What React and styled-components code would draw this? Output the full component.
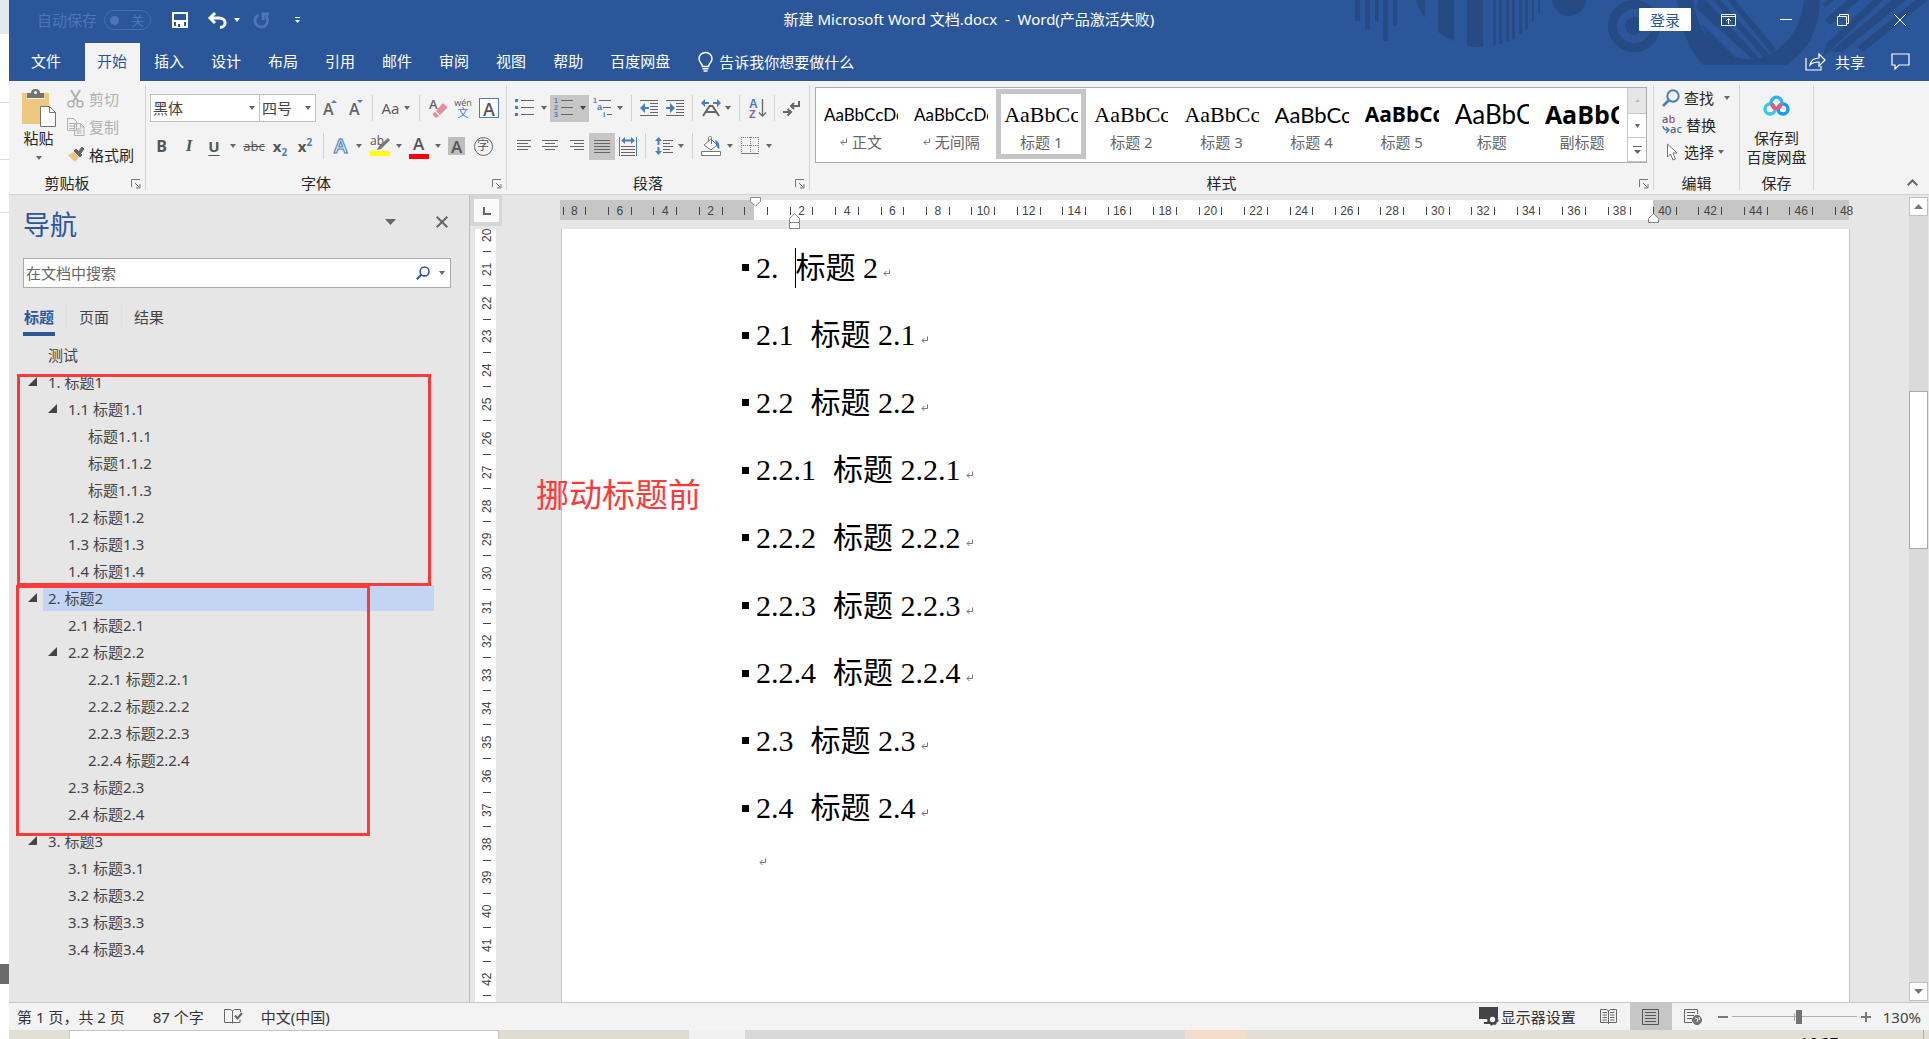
import React from "react";
import styled, { createGlobalStyle, css } from "styled-components";

const uiFont = '"Noto Sans", "Noto Sans CJK SC", sans-serif';
const blue = "#2b579a";
const accent = "#4a7ebb";
const ink = "#666666";

const GlobalStyle = createGlobalStyle`
  *, *::before, *::after { box-sizing: border-box; }
  html, body, #root { height: 100%; }
  body { margin: 0; overflow: hidden; background: #fff; font: 15px/16px ${uiFont}; color: #262626; }
  button, input, select { font: inherit; color: inherit; }
  button { margin: 0; padding: 0; border: 0; background: none; white-space: nowrap; }
  a { color: inherit; text-decoration: none; }
  svg { display: block; flex: none; overflow: visible; }
  ul, ol { margin: 0; padding: 0; list-style: none; }
  h1, h2 { margin: 0; font-weight: 400; }
`;

/* ---------- shell ---------- */
const Desktop = styled.div`
  display: grid;
  grid-template-columns: 9px minmax(0, 1fr);
  height: 100vh;
`;
const BackWindow = styled.div`
  display: flex;
  flex-direction: column;
  background: #fff;
`;
const BackBand = styled.div`
  height: ${(p) => p.$h}px;
  flex: ${(p) => (p.$grow ? 1 : "none")};
  background: ${(p) => p.$bg || "transparent"};
  border-bottom: ${(p) => (p.$line ? "1px solid #dcdcdc" : "0")};
`;
const Column = styled.div`
  display: flex;
  flex-direction: column;
  min-width: 0;
`;
const Window = styled.div`
  display: flex;
  flex-direction: column;
  flex: 1;
  min-height: 0;
`;
const Taskbar = styled.div`
  display: flex;
  height: 9px;
  overflow: hidden;
  background: #e4dfd5;
`;
const TaskPart = styled.div`
  width: ${(p) => p.$w}px;
  flex: ${(p) => (p.$grow ? 1 : "none")};
  background: ${(p) => p.$bg};
  border: solid #c4c4c4;
  border-width: ${(p) => (p.$edge ? "1px 1px 0 1px" : "0")};
`;
const Clock = styled.time`
  width: 130px;
  padding: 4px 0 0 6px;
  color: #000;
  border-right: 1px solid #b0b0b0;
`;

/* ---------- title bar ---------- */
const Header = styled.header`
  position: relative;
  flex: none;
  background: ${blue};
  color: #fff;
`;
const Artwork = styled.svg`
  position: absolute;
  top: 0;
  right: 0;
  overflow: hidden;
`;
const TitleBar = styled.div`
  position: relative;
  display: grid;
  grid-template-columns: 1fr auto 1fr;
  height: 43px;
`;
const QuickAccess = styled.div`
  display: flex;
  align-items: center;
  height: 40px;
  padding-left: 28px;
`;
const AutoSave = styled.label`
  display: flex;
  align-items: center;
  gap: 7px;
  color: #4d76b3;
`;
const Toggle = styled.span`
  display: flex;
  align-items: center;
  justify-content: space-between;
  width: 47px;
  height: 20px;
  padding: 0 6px 0 5px;
  border: 1px solid #4570ae;
  border-radius: 10px;
  font-size: 13px;
`;
const ToggleInput = styled.input`
  appearance: none;
  width: 9px;
  height: 9px;
  margin: 0;
  border-radius: 50%;
  background: #4d76b3;
`;
const QuickButton = styled.button`
  display: flex;
  align-items: center;
  justify-content: center;
  width: ${(p) => p.$w}px;
  height: 32px;
`;
const DocTitle = styled.h1`
  font-size: 15px;
  line-height: 38px;
  white-space: pre;
`;
const WindowActions = styled.div`
  display: flex;
  justify-content: flex-end;
  align-items: center;
  height: 39px;
  padding-right: 1px;
`;
const SignIn = styled.button`
  width: 52px;
  height: 23px;
  margin-right: 9px;
  border-radius: 1px;
  background: #fff;
  color: ${blue};
`;
const WindowButton = styled.button`
  display: grid;
  place-items: center;
  width: 57px;
  height: 39px;
`;

/* ---------- ribbon tabs ---------- */
const TabBar = styled.nav`
  position: relative;
  display: flex;
  gap: 2px;
  height: 38px;
`;
const Tab = styled.a`
  width: ${(p) => (p.$file ? "74px" : "auto")};
  padding: 0 ${(p) => (p.$file ? 0 : "13px")} 0 ${(p) => (p.$file ? 0 : "12px")};
  text-align: center;
  line-height: 36px;
  ${(p) => p.$active && css`background: #f3f3f3; color: ${blue};`}
`;
const TellMe = styled.button`
  display: flex;
  align-items: center;
  gap: 6px;
  height: 37px;
  margin-left: 13px;
`;
const ShareGroup = styled.div`
  display: flex;
  align-items: center;
  gap: 26px;
  height: 37px;
  margin-left: auto;
  padding-right: 19px;
`;
const ShareButton = styled.button`
  display: flex;
  align-items: center;
  gap: 9px;
`;

/* ---------- ribbon ---------- */
const Ribbon = styled.section`
  display: flex;
  flex: none;
  height: 114px;
  padding: 4px 0;
  background: #f3f3f3;
  border-bottom: 1px solid #d2d2d2;
`;
const Group = styled.section`
  display: flex;
  flex-direction: column;
  width: ${(p) => (p.$w ? `${p.$w}px` : "auto")};
  flex: ${(p) => (p.$w ? "none" : 1)};
  min-width: 0;
  border-right: 1px solid #d4d4d4;
`;
const GroupBody = styled.div`
  flex: 1;
  min-height: 0;
`;
const GroupFooter = styled.footer`
  display: flex;
  align-items: center;
  height: 15px;
`;
const GroupLabel = styled.span`
  flex: 1;
  text-align: center;
`;
const Launcher = styled.button`
  width: 20px;
  padding: 3px 0 0 6px;
`;
const ClipboardBody = styled.div`
  display: flex;
  gap: 6px;
  padding-left: 7px;
`;
const BigButton = styled.button`
  display: flex;
  flex-direction: column;
  align-items: center;
  width: ${(p) => p.$w}px;
  padding-top: ${(p) => p.$top}px;
  line-height: 19px;
  svg + span { margin-top: ${(p) => p.$gap}px; }
  span + svg { margin-top: 8px; }
`;
const SmallList = styled.div`
  display: flex;
  flex-direction: column;
  gap: 1px;
  padding-left: ${(p) => p.$pad || 0}px;
`;
const SmallButton = styled.button`
  display: flex;
  align-items: center;
  gap: 4px;
  height: ${(p) => p.$h || 27}px;
  color: ${(p) => (p.disabled ? "#b1b1b1" : "#262626")};
  span + svg { margin-left: ${(p) => p.$gap || 0}px; }
`;
const ToolRows = styled.div`
  display: flex;
  flex-direction: column;
  gap: 10px;
  padding: 9px 0 0 4px;
`;
const ToolRow = styled.div`
  display: flex;
  align-items: center;
  height: 28px;
`;
const Tool = styled.button`
  display: flex;
  align-items: center;
  justify-content: center;
  gap: ${(p) => p.$gap ?? 7}px;
  width: ${(p) => p.$w}px;
  height: 27px;
  color: #555;
  background: ${(p) => (p.$on ? "#c6c6c6" : "transparent")};
`;
const Rule = styled.span`
  width: 1px;
  height: 26px;
  margin: 0 4px;
  background: #d2d2d2;
`;
const Combo = styled.label`
  display: grid;
  align-items: center;
  width: ${(p) => p.$w}px;
  height: 28px;
  background: #fff;
  border: 1px solid #c0c0c0;
  border-left-width: ${(p) => (p.$joined ? 0 : 1)}px;
  select, svg { grid-area: 1 / 1; }
  svg { justify-self: end; margin-right: 4px; pointer-events: none; }
`;
const Select = styled.select`
  appearance: none;
  width: 100%;
  height: 26px;
  padding: 0 0 0 2px;
  border: 0;
  background: none;
  color: #444;
`;
const Glyph = styled.span`
  font-family: ${(p) => p.$font || '"Open Sans", "Noto Sans", sans-serif'};
  font-size: ${(p) => p.$size || 18}px;
  line-height: 20px;
  font-weight: ${(p) => p.$weight || 400};
  font-style: ${(p) => (p.$italic ? "italic" : "normal")};
  text-decoration: ${(p) => p.$line || "none"};
  text-decoration-thickness: 1px;
  text-underline-offset: 3px;
  color: ${(p) => p.$color || "#555"};
  sub, sup { font-size: 10px; line-height: 0; color: ${accent}; }
`;
const Underbar = styled.span`
  display: flex;
  flex-direction: column;
  align-items: center;
  width: 20px;
  border-bottom: 5px solid ${(p) => p.$color};
  line-height: 16px;
`;
const BoxedA = styled.span`
  display: grid;
  place-items: center;
  width: 20px;
  height: 20px;
  border: 1px solid ${accent};
  background: #fff;
`;
const ShadedA = styled.span`
  width: 17px;
  height: 18px;
  background: #bdbdbd;
  line-height: 18px;
`;
const OutlinedA = styled.span`
  width: 16px;
  font: 600 20px/22px "Open Sans", sans-serif;
  color: #fff;
  -webkit-text-stroke: 1px ${accent};
  text-shadow: 0 0 2px #7fb2ea;
`;
const CircledChar = styled.span`
  display: grid;
  place-items: center;
  width: 19px;
  height: 19px;
  border: 1px solid #666;
  border-radius: 50%;
  font-size: 12px;
`;
const Phonetic = styled.span`
  display: flex;
  flex-direction: column;
  align-items: center;
  font: 9px/9px "Open Sans", sans-serif;
`;
const PhoneticBase = styled.span`
  font: 11px/12px ${uiFont};
  color: ${accent};
`;

/* ---------- style gallery ---------- */
const Gallery = styled.div`
  display: grid;
  grid-template-columns: repeat(9, minmax(0, 1fr)) 19px;
  height: 76px;
  margin: 2px 6px 0 5px;
  background: #fff;
  border: 1px solid #ababab;
`;
const StyleCard = styled.button`
  display: flex;
  flex-direction: column;
  align-items: center;
  height: 70px;
  margin-top: 1px;
  padding: ${(p) => (p.$on ? "4px 3px" : "9px 8px")};
  border: ${(p) => (p.$on ? "5px solid #c5c5c5" : "0")};
  min-width: 0;
`;
const Sample = styled.span`
  align-self: stretch;
  height: 33px;
  overflow: hidden;
  text-align: left;
  line-height: 33px;
  color: #000;
  font-family: ${(p) => p.$font};
  font-size: ${(p) => p.$size}px;
  font-weight: ${(p) => p.$weight || 400};
`;
const StyleName = styled.span`
  display: flex;
  align-items: center;
  gap: 5px;
  margin-top: 5px;
  color: #666;
`;
const GalleryScroll = styled.div`
  display: grid;
  grid-template-rows: 26px 24px 24px;
`;
const GalleryButton = styled.button`
  display: grid;
  place-items: center;
  border: solid #c6c6c6;
  border-width: 0 0 1px 1px;
  background: ${(p) => (p.disabled ? "#e6e6e6" : "#fff")};
`;
const Collapse = styled.button`
  display: flex;
  align-items: flex-end;
  justify-content: flex-end;
  width: 115px;
  padding: 0 11px 4px 0;
`;

/* ---------- workspace ---------- */
const Workspace = styled.main`
  display: flex;
  flex: 1;
  min-height: 0;
  background: #e6e6e6;
`;
const NavPane = styled.aside`
  position: relative;
  width: 461px;
  flex: none;
  padding: 0 18px 0 14px;
  border-right: 1px solid #bcbcbc;
  color: #444;
`;
const PaneHeader = styled.header`
  display: flex;
  align-items: center;
  height: 60px;
  margin-bottom: 3px;
`;
const PaneTitle = styled.h2`
  flex: 1;
  font-size: 27px;
  line-height: 30px;
  color: ${blue};
`;
const PaneButton = styled.button`
  display: grid;
  place-items: center;
  width: 51px;
  height: 24px;
  margin-bottom: 6px;
  &:last-child { width: 18px; margin-left: 17px; }
`;
const SearchBox = styled.label`
  display: flex;
  align-items: center;
  gap: 9px;
  height: 30px;
  padding-right: 5px;
  background: #fff;
  border: 1px solid #ababab;
`;
const SearchInput = styled.input`
  flex: 1;
  min-width: 0;
  height: 28px;
  padding: 0 0 0 2px;
  border: 0;
  outline: 0;
  background: none;
  &::placeholder { color: #666; opacity: 1; }
`;
const PaneTabs = styled.div`
  display: flex;
  margin-top: 14px;
`;
const PaneTab = styled.button`
  width: 32px;
  height: 34px;
  border-bottom: 4px solid ${(p) => (p.$on ? blue : "transparent")};
  color: ${(p) => (p.$on ? blue : "#444")};
  font-weight: ${(p) => (p.$on ? 700 : 400)};
`;
const PaneRule = styled.span`
  width: 1px;
  height: 24px;
  margin: 3px 11px 0;
  background: #dfdfdf;
`;
const Outline = styled.ul`
  margin: 5px 17px 0 0;
`;
const OutlineItem = styled.li`
  display: flex;
  align-items: center;
  height: 27px;
  padding-left: ${(p) => 5 + 20 * p.$level}px;
`;
const Expander = styled.button`
  width: 15px;
  height: 20px;
`;
const OutlineLink = styled.a`
  flex: 1;
  padding-left: 5px;
  line-height: 26px;
  background: ${(p) => (p.$on ? "#c2d5f2" : "transparent")};
`;
const RedFrame = styled.div`
  position: absolute;
  top: ${(p) => p.$y}px;
  left: ${(p) => p.$x}px;
  width: ${(p) => p.$w}px;
  height: ${(p) => p.$h}px;
  border: 3px solid #fc3a3a;
  pointer-events: none;
`;
const RedNote = styled.div`
  position: absolute;
  top: 280px;
  left: 34px;
  font-size: 33px;
  line-height: 40px;
  color: #fc3a3a;
`;

/* ---------- rulers and page ---------- */
const SideRuler = styled.div`
  display: flex;
  flex-direction: column;
  width: 32px;
  flex: none;
`;
const TabStop = styled.button`
  display: grid;
  place-items: center;
  height: 31px;
  margin-bottom: 3px;
  background: #fafafa;
  border: solid #d6d6d6;
  border-width: 4px 3px 4px 4px;
  color: #666;
`;
const VScale = styled.div`
  display: flex;
  flex-direction: column;
  justify-content: space-between;
  flex: 1;
  width: 21px;
  margin-left: 5px;
  background: #fff;
  font: 12px/12px "Liberation Sans", sans-serif;
  color: #444;
`;
const VMark = styled.span`
  display: flex;
  align-items: center;
  justify-content: center;
  height: 12px;
  margin-left: 3px;
  writing-mode: vertical-rl;
  transform: rotate(180deg);
`;
const VTick = styled.i`
  width: 8px;
  height: 1px;
  background: #444;
`;
const Canvas = styled.div`
  position: relative;
  display: flex;
  flex-direction: column;
  gap: 9px;
  flex: 1;
  min-width: 0;
  padding: 5px 59px 0;
`;
const HScale = styled.div`
  position: relative;
  display: flex;
  justify-content: space-between;
  align-items: center;
  height: 20px;
  margin: 0 1px 0 -1px;
  padding: 2px 2px 0 3px;
  background: linear-gradient(to right, #c6c6c6 194px, #fff 194px calc(100% - 196px), #c6c6c6 0);
  font: 12px/12px "Liberation Sans", sans-serif;
  color: #444;
`;
const HMark = styled.span`
  display: flex;
  justify-content: center;
  width: 0;
`;
const HTick = styled.i`
  width: 1px;
  height: 8px;
  flex: none;
  background: #444;
`;
const IndentMarker = styled.svg`
  position: absolute;
  top: ${(p) => p.$top}px;
  ${(p) => p.$side}: ${(p) => p.$at}px;
`;
const Page = styled.article`
  flex: 1;
  padding: 5px 0 0 180px;
  background: #fff;
  border: solid #c6c6c6;
  border-width: 0 1px;
`;
const Headings = styled.ol`
  display: grid;
  grid-auto-rows: 1fr;
  height: 608px;
`;
const HeadingLine = styled.li`
  display: flex;
  align-items: center;
  font: 30px/40px "Liberation Serif", "Noto Sans CJK SC", serif;
  color: #000;
`;
const Bullet = styled.i`
  width: 7px;
  height: 7px;
  margin-right: 7px;
  background: #000;
`;
const HeadingNumber = styled.span`
  margin-right: 17px;
`;
const TextCaret = styled.i`
  width: 1px;
  height: 40px;
  margin-left: -1px;
  background: #000;
`;
const MarkSlot = styled.span`
  padding: 10px 0 0 5px;
`;
const EmptyLine = styled.p`
  margin: 0;
  padding: 16px 0 0 17px;
`;
const ScrollBar = styled.div`
  display: flex;
  flex-direction: column;
  width: 19px;
  flex: none;
  margin: 2px 1px 1px 0;
  background: #dadada;
`;
const ScrollButton = styled.button`
  display: grid;
  place-items: center;
  height: 19px;
  background: #fff;
  border: 1px solid #c0c0c0;
`;
const ScrollThumb = styled.div`
  height: 158px;
  margin: 175px 0 auto;
  background: #fff;
  border: 1px solid #ababab;
`;

/* ---------- status bar ---------- */
const StatusBar = styled.footer`
  display: flex;
  align-items: center;
  flex: none;
  height: 28px;
  padding: 0 8px;
  background: #f3f3f3;
  border-top: 1px solid #c6c6c6;
  color: #444;
`;
const StatusItem = styled.button`
  display: flex;
  align-items: center;
  gap: 2px;
  margin-right: ${(p) => p.$gap || 0}px;
  color: #333;
`;
const StatusRight = styled.div`
  display: flex;
  align-items: center;
  margin-left: auto;
`;
const ViewButton = styled.button`
  display: grid;
  place-items: center;
  width: 42px;
  height: 27px;
  background: ${(p) => (p.$on ? "#c6c6c6" : "transparent")};
`;
const ZoomButton = styled.button`
  width: 18px;
  height: 20px;
  padding-left: 4px;
`;
const ZoomSlider = styled.input`
  appearance: none;
  width: 125px;
  height: 14px;
  margin: 0;
  background:
    linear-gradient(#a6a6a6, #a6a6a6) center / 1px 8px no-repeat,
    linear-gradient(#b0b0b0, #b0b0b0) center / 100% 1px no-repeat;
  &::-webkit-slider-thumb {
    appearance: none;
    width: 6px;
    height: 14px;
    background: #737373;
  }
`;
const ZoomValue = styled.output`
  margin-left: 8px;
`;

/* ---------- drawings ---------- */
const Down = ({ c = "#666", w = 7, h = 4 }) => (
  <svg width={w} height={h} viewBox="0 0 7 4" preserveAspectRatio="none"><path d="M0 0h7L3.5 4z" fill={c} /></svg>
);
const Lines = ({ rows, w = 18, h = 18, c = ink, children }) => (
  <svg width={w} height={h} viewBox={`0 0 ${w} ${h}`} shapeRendering="crispEdges">
    {rows.map(([x, y, l]) => <rect key={`${x}-${y}`} x={x} y={y} width={l} height="1" fill={c} />)}
    {children}
  </svg>
);
const ReturnMark = () => (
  <svg width="7" height="8" viewBox="0 0 7 8" fill="none" stroke="#777"><path d="M6.5 0.5v4H1M3.5 2L1 4.5 3.5 7" /></svg>
);
const LauncherIcon = () => (
  <svg width="10" height="10" viewBox="0 0 10 10" fill="none" stroke="#777"><path d="M0.5 8V0.5H9M4 4l4.5 4.5M9 5v4H5" /></svg>
);
const Corner = () => <svg width="9" height="9" viewBox="0 0 9 9"><path d="M9 0v9H0z" fill="#444" /></svg>;
const Magnifier = ({ s = 18, c = accent }) => (
  <svg width={s} height={s} viewBox="0 0 18 18" fill="none" stroke={c} strokeWidth="2"><circle cx="11" cy="7" r="5.7" /><path d="M7 11L1 17" strokeWidth="2.6" /></svg>
);

const HeaderArt = () => (
  <Artwork width="580" height="81" viewBox="0 0 580 81" fill="#254a84" aria-hidden="true">
    <path d="M6 0h5v21H6zM16 0h5v29h-5zM26 0h4v21h-4zM34 0h5v41h-5zM44 0h4v26h-4z" />
    <path d="M67 0h9v18Q70 10 67 0zM89 0h16v41q-9-3-16-9zM118 0h16v47q-8 0-16-1z" />
    <path d="M144 0h3v45h-3zM150 0h3v44h-3zM157 0h3v42h-3zM163 0h3v39h-3zM170 0h3v34h-3zM176 0h3v29h-3zM183 0h2v22h-2zM189 0h2v13h-2z" />
    <circle cx="220" cy="-1" r="17" />
    <circle cx="285" cy="26" r="21.5" fill="none" stroke="#254a84" strokeWidth="9" />
    <circle cx="285" cy="26" r="9" />
    <path d="M328 0h16q3 22 14 37 18 22 41 22 22 0 39-18 15-17 17-41h16q-1 44-34 65h-83Q333 43 328 0z" />
    <path d="M350 0h7l53 58h-8L347 8zM364 0h7l49 54-6 3zM379 0h7l41 49-5 4zM353 24l34 34-10-2q-18-10-24-32z" />
    <path d="M498 0h12l-29 25-5-5zM480 0h5l-8 7-4-3zM543 0h14l-64 52h-12zM524 0h10l-61 58 5-15zM567 0h12l-65 52-6-5z" />
  </Artwork>
);
const SaveIcon = () => (
  <svg width="16" height="16" viewBox="0 0 16 16" fill="none" stroke="#fff" strokeWidth="2"><path d="M1 1h14v14H1zM1 9h14" /><path d="M4 10h8v5H4z" fill="#fff" stroke="none" /><path d="M6 12h2v3H6z" fill={blue} stroke="none" /></svg>
);
const UndoIcon = () => (
  <svg width="19" height="17" viewBox="0 0 19 17" fill="none" stroke="#fff" strokeWidth="3"><path d="M3 6h8c8 0 8 9 1 9.500M7 1L2 6l5 5" /></svg>
);
const RedoIcon = () => (
  <svg width="17" height="17" viewBox="0 0 17 17" fill="none" stroke="#4d76b3" strokeWidth="2.800"><path d="M5.500 3A6.300 6.300 0 1 0 12.500 4M10 8V2h6" /></svg>
);
const BulbIcon = () => (
  <svg width="15" height="20" viewBox="0 0 15 20" fill="none" stroke="#fff" strokeWidth="1.500"><path d="M4.500 14.500c0-3-3.500-4-3.500-7.800a6.500 6.200 0 0 1 13 0c0 3.800-3.500 4.800-3.500 7.800zM4.500 16.800h6M5.500 19h4" /></svg>
);
const ShareIcon = () => (
  <svg width="21" height="18" viewBox="0 0 21 18" fill="none" stroke="#fff" strokeWidth="1.200"><path d="M1 5v12h15v-4M5 12c1-5 4-7 9-7V1l6 6-6 6V9c-4 0-7 1-9 3z" /></svg>
);
const CommentIcon = () => (
  <svg width="19" height="17" viewBox="0 0 19 17" fill="none" stroke="#fff" strokeWidth="1.200"><path d="M1 1h17v11H8l-4 4v-4H1z" /></svg>
);
const PasteIcon = () => (
  <svg width="34" height="38" viewBox="0 0 34 38"><path d="M0 4h27v31H0z" fill="#edc87e" /><path d="M5 9V4h4q0-4 4.500-4T18 4h4v5z" fill="#737373" /><path d="M4 9.500h19" stroke="#f3f3f3" /><circle cx="13.500" cy="3.500" r="1.500" fill="#f3f3f3" /><path d="M18.500 17.500h9l6 6v14h-15z" fill="#fff" stroke="#737373" /><path d="M27.500 17.500v6h6" fill="none" stroke="#737373" /></svg>
);
const ScissorsIcon = () => (
  <svg width="18" height="18" viewBox="0 0 18 18" fill="none" stroke="#b1b1b1" strokeWidth="1.500"><path d="M4 0l7.500 12M13 0L6 12" strokeWidth="2" /><circle cx="4" cy="14" r="3" /><circle cx="13" cy="14" r="3" /></svg>
);
const CopyIcon = () => (
  <svg width="18" height="18" viewBox="0 0 18 18" fill="#f3f3f3" stroke="#b1b1b1"><path d="M.5.5h6l3 3v9h-9zM2 5.500h5M2 8h5M2 10.500h5M7.500 5.500h6l3.500 3.500v8.500H7.500zM13.500 5.500V9H17M9.500 11h5M9.500 13h5M9.500 15h5" /></svg>
);
const BrushIcon = () => (
  <svg width="18" height="17" viewBox="0 0 18 17"><path d="M1 9l6-3 5 5-4 5z" fill="#edc380" /><path d="M7 5l6 6 2-2-6-6zM12 5l3-4 2 2-3 4z" fill="#666" stroke="#666" /></svg>
);
const GrowA = ({ down }) => (
  <svg width="14" height="18" viewBox="0 0 14 18"><text x="0" y="16" fontFamily="Open Sans" fontSize="16" fontWeight="600" fill="#666">A</text><path d={down ? "M8 1h6l-3 3z" : "M8 4h6l-3-3z"} fill={accent} /></svg>
);
const EraserIcon = () => (
  <svg width="19" height="20" viewBox="0 0 19 20"><text x="0" y="11" fontFamily="Open Sans" fontSize="13" fontWeight="600" fill="#666">A</text><path d="M7 13l6-7q1-1 2 0l2.500 2.500q1 1 0 2L11 17z" fill="#e98b9b" /><path d="M6 14l4 4-2 1.500q-1 .5-2-.3L4 17q-.6-1 0-1.500z" fill="#e98b9b" /></svg>
);
const HighlightIcon = () => (
  <svg width="20" height="20" viewBox="0 0 20 20"><rect y="15" width="20" height="5" fill="#ff0" /><text x="0" y="9" fontFamily="Open Sans" fontSize="12" fill="#555">ab</text><path d="M18 2l2 2-9 9-4 1 2-4z" fill="#777" /></svg>
);
const BulletsIcon = () => (
  <Lines w={19} rows={[[6, 1, 13], [6, 8, 13], [6, 15, 13]]}><path d="M0 0h3v3H0zM0 7h3v3H0zM0 14h3v3H0z" fill={accent} /></Lines>
);
const NumbersIcon = () => (
  <Lines w={19} rows={[[7, 1, 12], [7, 8, 12], [7, 15, 12]]}>{[1, 2, 3].map((n) => <text key={n} x="0" y={7 * n - 3} fontFamily="Liberation Sans" fontSize="7" fontWeight="700" fill={accent}>{n}</text>)}</Lines>
);
const MultiIcon = () => (
  <Lines w={19} rows={[[6, 1, 12], [10, 8, 8], [14, 15, 5]]}><text x="0" y="4" fontFamily="Liberation Sans" fontSize="7" fontWeight="700" fill={accent}>1</text><text x="4" y="11" fontFamily="Liberation Sans" fontSize="9" fontWeight="700" fill={accent}>a</text><text x="10" y="18" fontFamily="Liberation Sans" fontSize="8" fontWeight="700" fill={accent}>i</text></Lines>
);
const IndentIcon = ({ right }) => (
  <Lines w={18} rows={[[0, 1, 18], [10, 4, 8], [10, 7, 8], [10, 10, 8], [10, 13, 8], [0, 16, 18]]}><path d={right ? "M0 8h4V4l5 5-5 5v-4H0z" : "M9 8H5V4L0 9l5 5v-4h4z"} fill={accent} shapeRendering="auto" /></Lines>
);
const AsianIcon = () => (
  <svg width="20" height="18" viewBox="0 0 20 18"><path d="M0 4l4-4v3h4v2H4v3zM20 4l-4-4v3h-4v2h4v3z" fill={accent} /><path d="M2 17L8.500 7h3L18 17M5 13h10" fill="none" stroke="#666" strokeWidth="2" /></svg>
);
const SortIcon = () => (
  <svg width="17" height="19" viewBox="0 0 17 19"><text x="0" y="9" fontFamily="Liberation Sans" fontSize="12" fontWeight="700" fill={accent}>A</text><text x="0" y="19" fontFamily="Liberation Sans" fontSize="11" fontWeight="700" fill="#8e5bab">Z</text><path d="M13.500 0v17M10 13.500l3.500 3.500 3.500-3.500" fill="none" stroke="#666" strokeWidth="1.300" /></svg>
);
const MarksIcon = () => (
  <svg width="17" height="15" viewBox="0 0 17 15" fill="none" stroke="#666" strokeWidth="2"><path d="M16 0v5H8M11 2L8 5l3 3M0 11h7M4.500 8L8 11l-3.500 3.500" /></svg>
);
const Align = ({ xs }) => <Lines w={17} h={13} rows={xs.map(([x, l], i) => [x, i * 3, l])} />;
const DistributeIcon = () => (
  <Lines w={18} h={19} rows={[[2, 9, 14], [2, 12, 14], [2, 15, 14], [2, 18, 14]]}><path d="M0 0h1v19H0zM17 0h1v19h-1z" fill={accent} /><path d="M2 3.500L6 0v2.500h6V0l4 3.500L12 7V4.500H6V7z" fill={accent} shapeRendering="auto" /></Lines>
);
const SpacingIcon = () => (
  <Lines w={18} h={18} rows={[[8, 3, 10], [8, 6, 7], [8, 9, 10], [8, 12, 7], [8, 15, 10]]}><path d="M3.500 0L7 4H4.500v4h-2V4H0zM3.500 18L7 14H4.500v-4h-2v4H0z" fill={accent} shapeRendering="auto" /></Lines>
);
const BucketIcon = () => (
  <svg width="20" height="20" viewBox="0 0 20 20" fill="none" stroke="#777"><path d="M.5 15.500h19v4H.5zM3 9l7-6 6 6-6 5zM7.500 6V1.500q0-1 1-1h1q1 0 1 1V8" fill="#fff" /><path d="M14 4q5 1 4.500 9-2 0-3-3z" fill={accent} stroke="none" /></svg>
);
const BorderIcon = () => (
  <svg width="18" height="18" viewBox="0 0 18 18" stroke="#777" strokeDasharray="1 1" shapeRendering="crispEdges"><path d="M0 .5h18M.5 0v17M17.500 0v17M9.500 0v17M0 8.500h18" /><path d="M0 16.500h18" strokeDasharray="none" /></svg>
);
const ReplaceIcon = () => (
  <svg width="20" height="20" viewBox="0 0 20 20" fontFamily="Open Sans" fontSize="11" fontWeight="600"><text x="0" y="8" fill="#666">a<tspan fill="#8e5bab">b</tspan></text><text x="8" y="18" fill="#666">a<tspan fill={accent}>c</tspan></text><path d="M1 11q0 4 5 4M4 12l3 3-3 3" fill="none" stroke={accent} strokeWidth="1.500" /></svg>
);
const PointerIcon = () => (
  <svg width="18" height="18" viewBox="0 0 18 18" fill="#fff" stroke="#777"><path d="M5.500 1v13l3-3 2.500 6 2.500-1-2.500-6h4z" /></svg>
);
const CloudIcon = () => (
  <svg width="27" height="21" viewBox="0 0 27 21" fill="none" strokeWidth="3.400"><circle cx="7" cy="14" r="5" stroke="#3cc6ee" /><circle cx="20" cy="14" r="5" stroke="#149bf5" /><path d="M9.500 11A5.300 5.300 0 1 1 17.500 11" stroke="#35aef3" /><path d="M9 8.500q.5 5 4.500 5t4.500-5" stroke="#f0566e" /></svg>
);
const ProofIcon = () => (
  <svg width="19" height="15" viewBox="0 0 19 15" fill="none" stroke="#666"><path d="M8.500 14.500v-1H.5V.5h6l2 1.500 2-1.500h6V3M8.500 2v12M8.500 13.500H16v-3" /><path d="M11 6.500l2.500 3L18 4" strokeWidth="2" /></svg>
);
const MonitorIcon = () => (
  <svg width="20" height="19" viewBox="0 0 20 19"><path d="M0 0h19v12H0zM5 15h6v2H5z" fill="#444" /><circle cx="13.500" cy="12.500" r="4" fill="#f3f3f3" stroke="#444" strokeWidth="2.600" /><circle cx="13.500" cy="12.500" r="5.300" fill="none" stroke="#444" strokeWidth="1.600" strokeDasharray="2 2.100" /></svg>
);
const ReadIcon = () => (
  <svg width="17" height="15" viewBox="0 0 17 15" fill="none" stroke="#666"><path d="M8.500 15V1.500M8.500 13.500h-8V.5h6l2 1.500 2-1.500h6v13zM2.500 3.500H7M2.500 6H7M2.500 8.500H7M2.500 11H7M10 3.500h4.500M10 6h4.500M10 8.500h4.500M10 11h4.500" /></svg>
);
const PrintIcon = () => (
  <svg width="17" height="16" viewBox="0 0 17 16" fill="none" stroke="#555"><path d="M.5.5h16v15H.5zM3 3.500h11M3 6.500h11M3 9.500h11M3 12.500h11" /></svg>
);
const WebIcon = () => (
  <svg width="18" height="16" viewBox="0 0 18 16" fill="none" stroke="#666"><path d="M8 13.500H.5V.5h13V5M3 3.500h8M3 6.500h7M3 9.500h5" /><circle cx="13" cy="11" r="4.500" fill="#777" /><path d="M11 9l3 1-1 3M15 8l1 3" stroke="#f3f3f3" /></svg>
);

/* ---------- data ---------- */
const tabs = ["插入", "设计", "布局", "引用", "邮件", "审阅", "视图", "帮助", "百度网盘"];
const sans = '"Lato", sans-serif';
const sansBold = '"Open Sans", sans-serif';
const serif = '"Liberation Serif", serif';
const styles = [
  { name: "正文", sample: "AaBbCcDc", font: sans, size: 17, mark: true },
  { name: "无间隔", sample: "AaBbCcDc", font: sans, size: 17, mark: true },
  { name: "标题 1", sample: "AaBbCc", font: serif, size: 22, on: true },
  { name: "标题 2", sample: "AaBbCc", font: serif, size: 22 },
  { name: "标题 3", sample: "AaBbCc", font: serif, size: 22 },
  { name: "标题 4", sample: "AaBbCc", font: sans, size: 22 },
  { name: "标题 5", sample: "AaBbCc", font: sansBold, size: 21, weight: 700 },
  { name: "标题", sample: "AaBbC", font: sans, size: 26 },
  { name: "副标题", sample: "AaBbC", font: sansBold, size: 25, weight: 700 },
];
const outline = [
  [0, "测试"], [0, "1. 标题1", true], [1, "1.1 标题1.1", true], [2, "标题1.1.1"], [2, "标题1.1.2"], [2, "标题1.1.3"],
  [1, "1.2 标题1.2"], [1, "1.3 标题1.3"], [1, "1.4 标题1.4"], [0, "2. 标题2", true], [1, "2.1 标题2.1"],
  [1, "2.2 标题2.2", true], [2, "2.2.1 标题2.2.1"], [2, "2.2.2 标题2.2.2"], [2, "2.2.3 标题2.2.3"],
  [2, "2.2.4 标题2.2.4"], [1, "2.3 标题2.3"], [1, "2.4 标题2.4"], [0, "3. 标题3", true],
  [1, "3.1 标题3.1"], [1, "3.2 标题3.2"], [1, "3.3 标题3.3"], [1, "3.4 标题3.4"],
];
const headings = [
  ["2.", "标题 2"], ["2.1", "标题 2.1"], ["2.2", "标题 2.2"], ["2.2.1", "标题 2.2.1"], ["2.2.2", "标题 2.2.2"],
  ["2.2.3", "标题 2.2.3"], ["2.2.4", "标题 2.2.4"], ["2.3", "标题 2.3"], ["2.4", "标题 2.4"],
];
/* Quarter steps between numbers: number, tick, blank, tick. */
const quarters = Array.from({ length: 114 }, (_, i) => i - 17);
const rows = Array.from({ length: 23 }, (_, i) => i + 20);

function RibbonGroup({ label, w, launcher, children }) {
  return (
    <Group $w={w} aria-label={label}>
      <GroupBody>{children}</GroupBody>
      <GroupFooter>
        <GroupLabel>{label}</GroupLabel>
        {launcher && <Launcher aria-label={`${label}选项`}><LauncherIcon /></Launcher>}
      </GroupFooter>
    </Group>
  );
}

function TopBar() {
  return (
    <Header>
      <HeaderArt />
      <TitleBar>
        <QuickAccess>
          <AutoSave>自动保存<Toggle><ToggleInput type="checkbox" />关</Toggle></AutoSave>
          <QuickButton $w={58} aria-label="保存"><SaveIcon /></QuickButton>
          <QuickButton $w={16} aria-label="撤消"><UndoIcon /></QuickButton>
          <QuickButton $w={24} aria-label="撤消列表"><Down c="#fff" w={6} /></QuickButton>
          <QuickButton $w={24} aria-label="恢复"><RedoIcon /></QuickButton>
          <QuickButton $w={48} aria-label="自定义快速访问工具栏">
            <svg width="5" height="7" viewBox="0 0 5 7" fill="#fff"><path d="M0 0h5v1H0zM0 3h5L2.500 6z" /></svg>
          </QuickButton>
        </QuickAccess>
        <DocTitle>{"新建 Microsoft Word 文档.docx  -  Word(产品激活失败)"}</DocTitle>
        <WindowActions>
          <SignIn>登录</SignIn>
          <WindowButton aria-label="功能区显示选项">
            <svg width="15" height="12" viewBox="0 0 15 12" fill="none" stroke="#fff"><path d="M.5.5h14v11H.5zM.5 2.500h14M7.500 10V5M5 7l2.500-2.500L10 7" /></svg>
          </WindowButton>
          <WindowButton aria-label="最小化"><svg width="12" height="1"><rect width="12" height="1" fill="#fff" /></svg></WindowButton>
          <WindowButton aria-label="还原">
            <svg width="12" height="12" viewBox="0 0 12 12" fill="none" stroke="#fff"><path d="M.5 2.500h9v9h-9zM2.500 2.500v-2h9v9h-2" /></svg>
          </WindowButton>
          <WindowButton aria-label="关闭">
            <svg width="12" height="12" viewBox="0 0 12 12" stroke="#fff"><path d="M0 0l12 12M12 0L0 12" /></svg>
          </WindowButton>
        </WindowActions>
      </TitleBar>
      <TabBar>
        <Tab href="#file" $file>文件</Tab>
        <Tab href="#home" $active>开始</Tab>
        {tabs.map((t) => <Tab key={t} href={`#${t}`}>{t}</Tab>)}
        <TellMe><BulbIcon />告诉我你想要做什么</TellMe>
        <ShareGroup>
          <ShareButton><ShareIcon />共享</ShareButton>
          <button aria-label="批注"><CommentIcon /></button>
        </ShareGroup>
      </TabBar>
    </Header>
  );
}

function FontGroup() {
  return (
    <RibbonGroup label="字体" w={361} launcher>
      <ToolRows>
        <ToolRow>
          <Combo $w={110}><Select aria-label="字体"><option>黑体</option></Select><Down w={6} /></Combo>
          <Combo $w={56} $joined><Select aria-label="字号"><option>四号</option></Select><Down w={6} /></Combo>
          <Tool $w={28} aria-label="增大字号"><GrowA /></Tool>
          <Tool $w={24} aria-label="减小字号"><GrowA down /></Tool>
          <Rule />
          <Tool $w={38} $gap={5}><Glyph $size={15}>Aa</Glyph><Down w={6} /></Tool>
          <Rule />
          <Tool $w={28} aria-label="清除格式"><EraserIcon /></Tool>
          <Tool $w={22}><Phonetic>wén<PhoneticBase>文</PhoneticBase></Phonetic></Tool>
          <Tool $w={30}><BoxedA><Glyph $weight={600}>A</Glyph></BoxedA></Tool>
        </ToolRow>
        <ToolRow>
          <Tool $w={23}><Glyph $size={16} $weight={700}>B</Glyph></Tool>
          <Tool $w={32}><Glyph $size={17} $weight={700} $italic $font={serif}>I</Glyph></Tool>
          <Tool $w={34} $gap={10}><Glyph $size={15} $weight={700} $line="underline">U</Glyph><Down w={6} /></Tool>
          <Tool $w={30}><Glyph $size={13} $line="line-through">abc</Glyph></Tool>
          <Tool $w={22}><Glyph $size={15} $weight={700}>x<sub>2</sub></Glyph></Tool>
          <Tool $w={28}><Glyph $size={15} $weight={700}>x<sup>2</sup></Glyph></Tool>
          <Rule />
          <Tool $w={38}><OutlinedA>A</OutlinedA><Down w={6} /></Tool>
          <Tool $w={39} $gap={6} aria-label="突出显示"><HighlightIcon /><Down w={6} /></Tool>
          <Tool $w={39} $gap={6}><Underbar $color="#f00"><Glyph $size={17} $weight={600}>A</Glyph></Underbar><Down w={6} /></Tool>
          <Tool $w={25}><ShadedA><Glyph $weight={600} $size={17}>A</Glyph></ShadedA></Tool>
          <Tool $w={28}><CircledChar>字</CircledChar></Tool>
        </ToolRow>
      </ToolRows>
    </RibbonGroup>
  );
}

function ParagraphGroup() {
  return (
    <RibbonGroup label="段落" w={303} launcher>
      <ToolRows>
        <ToolRow>
          <Tool $w={39} aria-label="项目符号"><BulletsIcon /><Down w={6} /></Tool>
          <Tool $w={39} $on aria-label="编号"><NumbersIcon /><Down w={6} c="#444" /></Tool>
          <Tool $w={38} $gap={5} aria-label="多级列表"><MultiIcon /><Down w={6} /></Tool>
          <Rule />
          <Tool $w={26} aria-label="减少缩进量"><IndentIcon /></Tool>
          <Tool $w={26} aria-label="增加缩进量"><IndentIcon right /></Tool>
          <Rule />
          <Tool $w={38} $gap={4} aria-label="中文版式"><AsianIcon /><Down w={6} /></Tool>
          <Rule />
          <Tool $w={26} aria-label="排序"><SortIcon /></Tool>
          <Rule />
          <Tool $w={24} aria-label="显示编辑标记"><MarksIcon /></Tool>
        </ToolRow>
        <ToolRow>
          <Tool $w={26} aria-label="左对齐"><Align xs={[[1, 14], [1, 11], [1, 14], [1, 11]]} /></Tool>
          <Tool $w={26} aria-label="居中"><Align xs={[[0, 16], [3, 10], [0, 16], [3, 10]]} /></Tool>
          <Tool $w={26} aria-label="右对齐"><Align xs={[[2, 14], [6, 10], [2, 14], [6, 10]]} /></Tool>
          <Tool $w={26} $on aria-label="两端对齐"><Align xs={[[0, 16], [0, 16], [0, 16], [0, 16], [0, 16]]} /></Tool>
          <Tool $w={26} aria-label="分散对齐"><DistributeIcon /></Tool>
          <Rule />
          <Tool $w={38} $gap={5} aria-label="行距"><SpacingIcon /><Down w={6} /></Tool>
          <Rule />
          <Tool $w={39} $gap={6} aria-label="底纹"><BucketIcon /><Down w={6} /></Tool>
          <Tool $w={40} aria-label="边框"><BorderIcon /><Down w={6} /></Tool>
        </ToolRow>
      </ToolRows>
    </RibbonGroup>
  );
}

function HomeRibbon() {
  return (
    <Ribbon>
      <RibbonGroup label="剪贴板" w={137} launcher>
        <ClipboardBody>
          <BigButton $w={45} $top={4} $gap={2}><PasteIcon /><span>粘贴</span><Down w={6} /></BigButton>
          <SmallList>
            <SmallButton disabled><ScissorsIcon />剪切</SmallButton>
            <SmallButton disabled><CopyIcon />复制</SmallButton>
            <SmallButton><BrushIcon />格式刷</SmallButton>
          </SmallList>
        </ClipboardBody>
      </RibbonGroup>
      <FontGroup />
      <ParagraphGroup />
      <RibbonGroup label="样式" launcher>
        <Gallery>
          {styles.map((s) => (
            <StyleCard key={s.name} $on={s.on}>
              <Sample $font={s.font} $size={s.size} $weight={s.weight}>{s.sample}</Sample>
              <StyleName>{s.mark && <ReturnMark />}{s.name}</StyleName>
            </StyleCard>
          ))}
          <GalleryScroll>
            <GalleryButton disabled aria-label="上一行"><svg width="5" height="3"><path d="M0 3h5L2.500 0z" fill="#bbb" /></svg></GalleryButton>
            <GalleryButton aria-label="下一行"><Down w={5} /></GalleryButton>
            <GalleryButton aria-label="其他"><svg width="9" height="8" viewBox="0 0 9 8" fill="#666"><path d="M0 0h9v1H0zM1 4h7L4.500 8z" /></svg></GalleryButton>
          </GalleryScroll>
        </Gallery>
      </RibbonGroup>
      <RibbonGroup label="编辑" w={86}>
        <SmallList $pad={8}>
          <SmallButton $h={26} $gap={6}><Magnifier /><span>查找</span><Down w={6} /></SmallButton>
          <SmallButton $h={26}><ReplaceIcon />替换</SmallButton>
          <SmallButton $h={26}><PointerIcon /><span>选择</span><Down w={6} /></SmallButton>
        </SmallList>
      </RibbonGroup>
      <RibbonGroup label="保存" w={74}>
        <BigButton $w={73} $top={10} $gap={13}><CloudIcon /><span>保存到<br />百度网盘</span></BigButton>
      </RibbonGroup>
      <Collapse aria-label="折叠功能区">
        <svg width="11" height="7" viewBox="0 0 11 7" fill="none" stroke="#666" strokeWidth="2"><path d="M.7 6.300l4.800-4.800 4.800 4.800" /></svg>
      </Collapse>
    </Ribbon>
  );
}

function Navigation() {
  return (
    <NavPane>
      <PaneHeader>
        <PaneTitle>导航</PaneTitle>
        <PaneButton aria-label="任务窗格选项"><Down w={11} h={6} /></PaneButton>
        <PaneButton aria-label="关闭"><svg width="12" height="12" viewBox="0 0 12 12" stroke="#666" strokeWidth="2"><path d="M.7.7l10.600 10.600M11.300.7L.7 11.300" /></svg></PaneButton>
      </PaneHeader>
      <SearchBox>
        <SearchInput aria-label="在文档中搜索" placeholder="在文档中搜索" />
        <Magnifier s={14} c={blue} />
        <Down w={6} />
      </SearchBox>
      <PaneTabs>
        <PaneTab $on>标题</PaneTab><PaneRule />
        <PaneTab>页面</PaneTab><PaneRule />
        <PaneTab>结果</PaneTab>
      </PaneTabs>
      <Outline>
        {outline.map(([level, text, open]) => (
          <OutlineItem key={text} $level={level}>
            {open ? <Expander aria-label="折叠"><Corner /></Expander> : <Expander as="span" />}
            <OutlineLink href="#doc" $on={text === "2. 标题2"}>{text}</OutlineLink>
          </OutlineItem>
        ))}
      </Outline>
      <RedFrame $x={8} $y={179} $w={414} $h={212} />
      <RedFrame $x={7} $y={390} $w={354} $h={251} />
    </NavPane>
  );
}

function Ruler() {
  return (
    <HScale>
      {quarters.map((q) => (
        <HMark key={q}>
          {q % 4 === 0 ? (q === 0 ? null : Math.abs(q / 2)) : q % 2 !== 0 ? <HTick /> : null}
        </HMark>
      ))}
      <IndentMarker $top={-3} $side="left" $at={190} width="11" height="10" viewBox="0 0 11 10" fill="#fff" stroke="#888"><path d="M.5.500h10v4l-5 4.500-5-4.500z" /></IndentMarker>
      <IndentMarker $top={13} $side="left" $at={229} width="11" height="16" viewBox="0 0 11 16" fill="#fff" stroke="#888"><path d="M5.500.7l5 4.800v10H.5v-10zM.5 9.500h10" /></IndentMarker>
      <IndentMarker $top={13} $side="right" $at={190} width="11" height="10" viewBox="0 0 11 10" fill="#fff" stroke="#888"><path d="M5.500.7l5 4.800v4H.5v-4z" /></IndentMarker>
    </HScale>
  );
}

function Editor() {
  return (
    <>
      <SideRuler>
        <TabStop aria-label="制表符"><svg width="8" height="8" viewBox="0 0 8 8" fill="none" stroke="#666" strokeWidth="2"><path d="M1 0v7h7" /></svg></TabStop>
        <VScale>
          {rows.map((n) => (
            <React.Fragment key={n}><VMark>{n}</VMark><VMark><VTick /></VMark></React.Fragment>
          ))}
        </VScale>
      </SideRuler>
      <Canvas>
        <Ruler />
        <Page id="doc">
          <Headings>
            {headings.map(([num, text], i) => (
              <HeadingLine key={num}>
                <Bullet />
                <HeadingNumber>{num}</HeadingNumber>
                {i === 0 && <TextCaret />}
                {text}
                <MarkSlot><ReturnMark /></MarkSlot>
              </HeadingLine>
            ))}
          </Headings>
          <EmptyLine><ReturnMark /></EmptyLine>
        </Page>
        <RedNote>挪动标题前</RedNote>
      </Canvas>
      <ScrollBar>
        <ScrollButton aria-label="向上滚动"><svg width="9" height="5"><path d="M0 5h9L4.500 0z" fill="#777" /></svg></ScrollButton>
        <ScrollThumb />
        <ScrollButton aria-label="向下滚动"><svg width="9" height="5"><path d="M0 0h9L4.500 5z" fill="#777" /></svg></ScrollButton>
      </ScrollBar>
    </>
  );
}

function Status() {
  return (
    <StatusBar>
      <StatusItem $gap={28}>第 1 页，共 2 页</StatusItem>
      <StatusItem $gap={20}>87 个字</StatusItem>
      <StatusItem $gap={18} aria-label="校对"><ProofIcon /></StatusItem>
      <StatusItem>中文(中国)</StatusItem>
      <StatusRight>
        <StatusItem $gap={12}><MonitorIcon />显示器设置</StatusItem>
        <ViewButton aria-label="阅读视图"><ReadIcon /></ViewButton>
        <ViewButton $on aria-label="页面视图"><PrintIcon /></ViewButton>
        <ViewButton aria-label="Web 版式视图"><WebIcon /></ViewButton>
        <ZoomButton aria-label="缩小"><svg width="10" height="10"><rect y="4" width="10" height="2" fill="#777" /></svg></ZoomButton>
        <ZoomSlider type="range" aria-label="缩放" defaultValue={54} />
        <ZoomButton aria-label="放大"><svg width="10" height="10"><path d="M0 4h4V0h2v4h4v2H6v4H4V6H0z" fill="#777" /></svg></ZoomButton>
        <ZoomValue>130%</ZoomValue>
      </StatusRight>
    </StatusBar>
  );
}

export default function App() {
  return (
    <>
      <GlobalStyle />
      <Desktop>
        <BackWindow>
          <BackBand $h={34} $bg="#e4e9ec" />
          <BackBand $h={69} $line />
          <BackBand $h={57} $line />
          <BackBand $h={53} $line />
          <BackBand $grow />
          <BackBand $h={20} $bg="#6b6b6b" />
          <BackBand $h={55} />
        </BackWindow>
        <Column>
          <Window>
            <TopBar />
            <HomeRibbon />
            <Workspace>
              <Navigation />
              <Editor />
            </Workspace>
            <Status />
          </Window>
          <Taskbar>
            <TaskPart $w={60} $bg="#e4dfd5" />
            <TaskPart $w={430} $bg="#fff" $edge />
            <TaskPart $w={190} $bg="#e0dcd2" />
            <TaskPart $w={56} $bg="#f1f1ef" />
            <TaskPart $w={440} $bg="#d9d9d9" />
            <TaskPart $w={61} $bg="#f4dccb" />
            <TaskPart $grow $bg="#e3dfd6" />
            <Clock>16:27</Clock>
            <TaskPart $w={5} $bg="#e4dfd5" />
          </Taskbar>
        </Column>
      </Desktop>
    </>
  );
}
